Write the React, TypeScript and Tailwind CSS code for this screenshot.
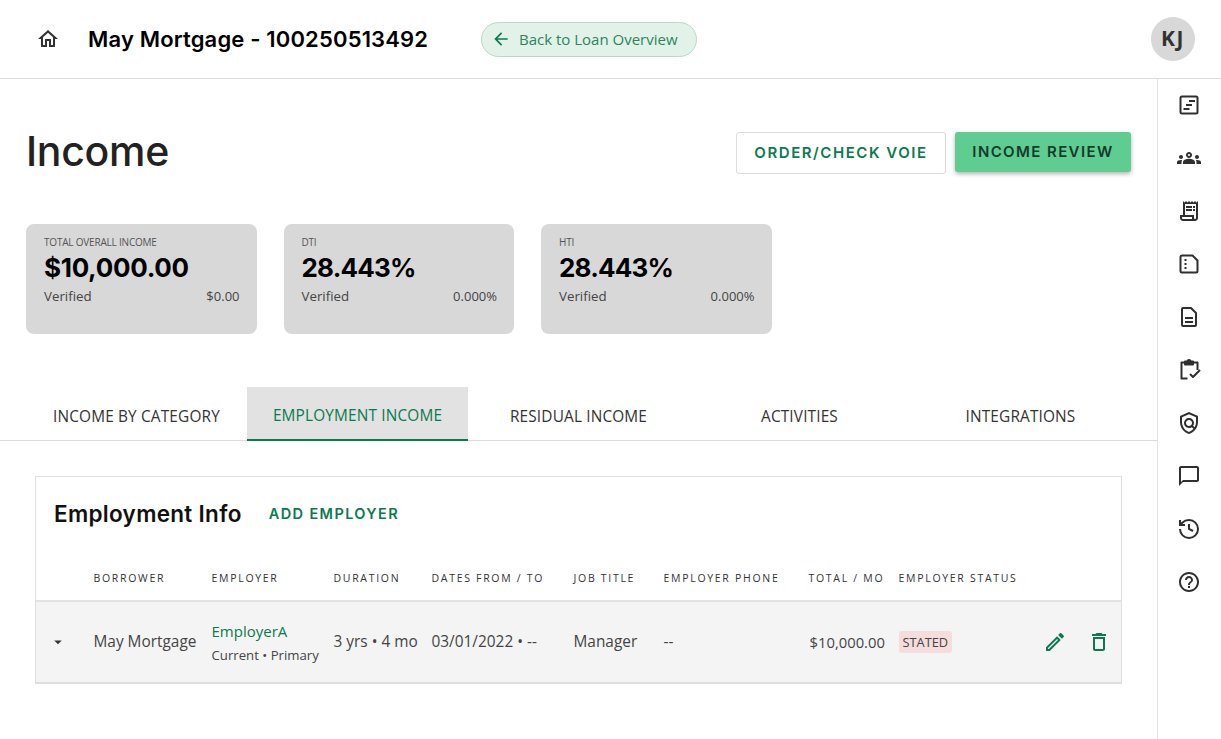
import React from "react";

const P = ({ d, className = "" }: { d: string; className?: string }) => (
  <svg viewBox="0 0 24 24" className={className} fill="currentColor">
    <path d={d} />
  </svg>
);
const S = ({ children, className = "" }: { children: React.ReactNode; className?: string }) => (
  <svg viewBox="0 0 24 24" className={className} fill="none" stroke="currentColor" strokeWidth={2} strokeLinejoin="round">
    {children}
  </svg>
);

const poppins = "font-['Inter','Liberation_Sans',sans-serif]";

function Stat({ label, value, right, valueClass }: { label: string; value: string; right: string; valueClass: string }) {
  return (
    <div className="w-[230.5px] h-[110px] bg-[#d8d8d8] rounded-lg pl-[18px] pr-[17px] pt-[12px] font-['Open_Sans',sans-serif]">
      <div className="text-[10px] leading-[13px] text-[#555] tracking-[-0.2px]">{label}</div>
      <div className={`${poppins} ${valueClass} text-[26px] leading-[33px] font-bold text-black mt-[2px]`}>{value}</div>
      <div className="flex justify-between items-center mt-[2px] text-[#444]">
        <span className="text-[13.3px] leading-[20px]">Verified</span>
        <span className="text-[13px] leading-[20px]">{right}</span>
      </div>
    </div>
  );
}

const cols = [
  { n: "BORROWER", w: "w-[118px]" },
  { n: "EMPLOYER", w: "w-[122px]" },
  { n: "DURATION", w: "w-[98px]" },
  { n: "DATES FROM / TO", w: "w-[142px]" },
  { n: "JOB TITLE", w: "w-[90px]" },
  { n: "EMPLOYER PHONE", w: "w-[145px]" },
  { n: "TOTAL / MO", w: "w-[90px]" },
  { n: "EMPLOYER STATUS", w: "w-[130px]" },
];

const G = "text-[#0b7a4f]";

const side: React.ReactNode[] = [
  <S key="a" className="w-6 h-6">
    <rect x="3.5" y="3.5" width="17" height="17" rx="1.5" />
    <path d="M12 8h6M9 12h6M6.5 16h6" />
  </S>,
  <P key="b" className="w-6 h-6" d="M4 13c1.1 0 2-.9 2-2s-.9-2-2-2-2 .9-2 2 .9 2 2 2zm1.13 1.1c-.37-.06-.74-.1-1.13-.1-.99 0-1.93.21-2.78.58C.48 14.9 0 15.62 0 16.43V18h4.5v-1.61c0-.83.23-1.61.63-2.29zM20 13c1.1 0 2-.9 2-2s-.9-2-2-2-2 .9-2 2 .9 2 2 2zm4 3.43c0-.81-.48-1.53-1.22-1.85-.85-.37-1.79-.58-2.78-.58-.39 0-.76.04-1.13.1.4.68.63 1.46.63 2.29V18H24v-1.57zm-7.76-2.78c-1.17-.52-2.61-.9-4.24-.9-1.63 0-3.07.39-4.24.9C6.68 14.13 6 15.21 6 16.39V18h12v-1.61c0-1.18-.68-2.26-1.76-2.74zM12 8c.55 0 1 .45 1 1s-.45 1-1 1-1-.45-1-1 .45-1 1-1m0-2c-1.66 0-3 1.34-3 3s1.34 3 3 3 3-1.34 3-3-1.34-3-3-3z" />,
  <svg key="c" viewBox="0 0 24 24" className="w-6 h-6" fill="currentColor">
    <path d="M19.5 3.5 18 2l-1.5 1.5L15 2l-1.5 1.5L12 2l-1.5 1.5L9 2 7.5 3.5 6 2v14H3v3c0 1.66 1.34 3 3 3h12c1.66 0 3-1.34 3-3V2l-1.5 1.5zM15 20H6c-.55 0-1-.45-1-1v-1h10v2zm4-1c0 .55-.45 1-1 1s-1-.45-1-1v-3H8V5h11v14z" />
    <path d="M9 7h6v2H9zm7 0h2v2h-2zm-7 3h6v2H9zm7 0h2v2h-2z" />
  </svg>,
  <svg key="d" viewBox="0 0 24 24" className="w-6 h-6" fill="none" stroke="currentColor" strokeWidth={2} strokeLinejoin="round">
    <path d="M5 3.5h10.5l5 5V19a1.5 1.5 0 0 1-1.5 1.5H5A1.5 1.5 0 0 1 3.5 19V5A1.5 1.5 0 0 1 5 3.5z" />
    <g fill="currentColor" stroke="none">
      <rect x="7.5" y="7" width="2" height="2" />
      <rect x="7.5" y="11" width="2" height="2" />
      <rect x="7.5" y="15" width="2" height="2" />
    </g>
  </svg>,
  <S key="e" className="w-6 h-6">
    <path d="M6 3h8l5 5v12a1 1 0 0 1-1 1H6a1 1 0 0 1-1-1V4a1 1 0 0 1 1-1z" />
    <path d="M8 13h8M8 17h8" />
  </S>,
  <S key="f" className="w-6 h-6">
    <path d="M10.5 20.5H4.5V4.5H8M16 4.5h4.5V12" />
    <path d="M8 6.5V3.5h2.5a1.5 1.5 0 0 1 3 0H16v3z" fill="currentColor" />
    <path d="M13 16l3 3 7-7" />
  </S>,
  <P key="g" className="w-6 h-6" d="M12 1 3 5v6c0 5.55 3.84 10.74 9 12 5.16-1.26 9-6.45 9-12V5l-9-4zm7 10c0 1.85-.51 3.65-1.38 5.21l-1.45-1.45c1.29-1.94 1.07-4.58-.64-6.29-.98-.98-2.25-1.47-3.53-1.47-1.28 0-2.56.49-3.54 1.46-1.95 1.95-1.95 5.12 0 7.07.98.98 2.26 1.46 3.54 1.46.97 0 1.94-.28 2.78-.84l1.72 1.72c-1.19 1.4-2.73 2.48-4.5 3.02-4.02-1.25-7-5.42-7-9.89V6.3l7-3.11 7 3.11V11zm-7 4c-1.66 0-3-1.34-3-3s1.34-3 3-3 3 1.34 3 3-1.34 3-3 3z" />,
  <P key="h" className="w-6 h-6" d="M20 2H4c-1.1 0-2 .9-2 2v18l4-4h14c1.1 0 2-.9 2-2V4c0-1.1-.9-2-2-2zm0 14H6l-2 2V4h16v12z" />,
  <svg key="i" viewBox="0 0 24 24" className="w-6 h-6" fill="none" stroke="currentColor" strokeWidth={2}>
    <path d="M3 12a9 9 0 1 0 9-9 9.75 9.75 0 0 0-6.74 2.74L3 8" />
    <path d="M3 3v5h5" />
    <path d="M12 7v5l4 2" />
  </svg>,
  <P key="j" className="w-6 h-6" d="M11 18h2v-2h-2v2zm1-16C6.48 2 2 6.48 2 12s4.48 10 10 10 10-4.48 10-10S17.52 2 12 2zm0 18c-4.41 0-8-3.59-8-8s3.59-8 8-8 8 3.59 8 8-3.59 8-8 8zm0-14c-2.21 0-4 1.79-4 4h2c0-1.1.9-2 2-2s2 .9 2 2c0 2-3 1.75-3 5h2c0-2.25 3-2.5 3-5 0-2.21-1.79-4-4-4z" />,
];

export default function App() {
  return (
    <div className="w-[1221px] h-[739px] overflow-hidden bg-white flex flex-col font-['Open_Sans',sans-serif]">
      <header className="h-[79px] shrink-0 border-b border-[#dcdcdc] flex items-center pl-[36px] pr-[26px]">
        <P className="w-6 h-6 text-[#333]" d="M12 5.69l5 4.5V18h-2v-6H9v6H7v-7.81l5-4.5M12 3L2 12h3v8h6v-6h2v6h6v-8h3L12 3z" />
        <h1 className={`${poppins} ml-[28px] text-[22px] font-semibold text-black tracking-[0.16px] whitespace-nowrap w-[340px] shrink-0`}>May Mortgage - 100250513492</h1>
        <button className="ml-[53px] w-[216px] h-[35px] rounded-full bg-[#e2f2e9] border border-[#bcd8c8] flex items-center pl-[9px] text-[15px] text-[#2a8560]">
          <P className="w-[20px] h-[20px] text-[#0b7a4f]" d="M20 11H7.83l5.59-5.59L12 4l-8 8 8 8 1.41-1.41L7.83 13H20v-2z" />
          <span className="ml-[8px] whitespace-nowrap">Back to Loan Overview</span>
        </button>
        <div className="ml-auto w-11 h-11 rounded-full bg-[#d8d8d8] flex items-center justify-center text-[#333] text-[21px] font-bold tracking-[1.5px]">KJ</div>
      </header>
      <div className="flex flex-1 min-h-0">
        <main className="w-[1157px] shrink-0">
          <div className="pl-[26px] pr-[26px] pt-[53px] flex items-start justify-between h-[106px]">
            <h2 className={`${poppins} text-[41px] font-medium text-[#222] tracking-[-0.3px] leading-[44px] -mt-[3px]`}>Income</h2>
            <div className="flex items-start gap-[9px]">
              <button className={`${poppins} w-[210px] h-[42px] bg-white border border-[#dcdcdc] rounded-[3px] text-[15px] font-semibold tracking-[1.55px] text-[#0b7a4f]`}>ORDER/CHECK VOIE</button>
              <button className={`${poppins} w-[176px] h-[40px] bg-[#5fcc92] rounded-[3px] text-[15px] font-semibold tracking-[1.4px] text-[#123c2a] shadow-[0_2px_4px_rgba(0,0,0,0.3)]`}>INCOME REVIEW</button>
            </div>
          </div>
          <div className="flex gap-[27px] pl-[26px] pt-[39px]">
            <Stat label="TOTAL OVERALL INCOME" value="$10,000.00" right="$0.00" valueClass="tracking-[-0.3px]" />
            <Stat label="DTI" value="28.443%" right="0.000%" valueClass="tracking-[-0.8px]" />
            <Stat label="HTI" value="28.443%" right="0.000%" valueClass="tracking-[-0.8px]" />
          </div>
          <nav className="mt-[53px] h-[54px] border-b border-[#dcdcdc] flex pl-[26px] text-[15.4px] text-[#333] tracking-[0.15px]">
            {["INCOME BY CATEGORY", "EMPLOYMENT INCOME", "RESIDUAL INCOME", "ACTIVITIES", "INTEGRATIONS"].map((t, i) => (
              <div
                key={t}
                className={
                  i === 1
                    ? `w-[221px] h-[54px] pt-[6px] shrink-0 flex items-center justify-center whitespace-nowrap bg-[#e2e2e2] border-b-2 border-[#0b7a4f] ${G}`
                    : "w-[221px] h-[53px] pt-[6px] shrink-0 flex items-center justify-center whitespace-nowrap"
                }
              >
                {t}
              </div>
            ))}
          </nav>
          <section className="ml-[35px] mt-[35px] w-[1087px] h-[208px] border border-[#dfdfdf] border-b-2">
            <div className="flex items-center h-[73px] pl-[18px]">
              <h3 className={`${poppins} text-[22.5px] font-semibold text-[#111] tracking-[0.3px] whitespace-nowrap`}>Employment Info</h3>
              <span className={`${poppins} ml-[27px] text-[14.5px] font-semibold tracking-[1.4px] text-[#0b7a4f] whitespace-nowrap`}>ADD EMPLOYER</span>
            </div>
            <div className="flex items-center h-[52px] pt-[8px] pl-[57.5px] border-b-2 border-[#e2e2e2] text-[10.5px] tracking-[1.7px] text-[#333] whitespace-nowrap">
              {cols.map((c) => (
                <div key={c.n} className={`${c.w} shrink-0`}>{c.n}</div>
              ))}
            </div>
            <div className="flex items-center h-[80px] bg-[#f4f4f4] text-[15.4px] text-[#444] whitespace-nowrap">
              <P className="w-[18px] h-[18px] ml-[13px] text-[#333]" d="M7 10l5 5 5-5z" />
              <div className="w-[118px] ml-[26.5px] shrink-0">May Mortgage</div>
              <div className="w-[122px] shrink-0">
                <div className={`${G} text-[15px] leading-[20px]`}>EmployerA</div>
                <div className="text-[13.2px] leading-[18px] mt-[5px]">Current • Primary</div>
              </div>
              <div className="w-[98px] shrink-0">3 yrs • 4 mo</div>
              <div className="w-[142px] shrink-0">03/01/2022 • --</div>
              <div className="w-[90px] shrink-0">Manager</div>
              <div className="w-[145px] shrink-0">--</div>
              <div className="w-[90px] shrink-0 text-[14.8px] pl-[1px]">$10,000.00</div>
              <div className="w-[130px] shrink-0">
                <span className="inline-block bg-[#f4dddd] rounded-[3px] px-[4px] text-[12.8px] leading-[22px] text-[#444]">STATED</span>
              </div>
              <P className={`w-6 h-6 ml-[14px] ${G}`} d="M14.06 9.02l.92.92L5.92 19H5v-.92l9.06-9.06M17.66 3c-.25 0-.51.1-.7.29l-1.83 1.83 3.75 3.75 1.83-1.83c.39-.39.39-1.02 0-1.41l-2.34-2.34c-.2-.2-.45-.29-.71-.29zm-3.6 3.19L3 17.25V21h3.75L17.81 9.94l-3.75-3.75z" />
              <P className={`w-6 h-6 ml-[20px] ${G}`} d="M16 9v10H8V9h8m-1.5-6h-5l-1 1H5v2h14V4h-3.5l-1-1zM18 7H6v12c0 1.1.9 2 2 2h8c1.1 0 2-.9 2-2V7z" />
            </div>
          </section>
        </main>
        <aside className="flex-1 border-l border-[#e4e4e4] flex flex-col items-center pt-[14px] pr-[2px] gap-[29px] text-[#2f2f2f]">
          {side}
        </aside>
      </div>
    </div>
  );
}
